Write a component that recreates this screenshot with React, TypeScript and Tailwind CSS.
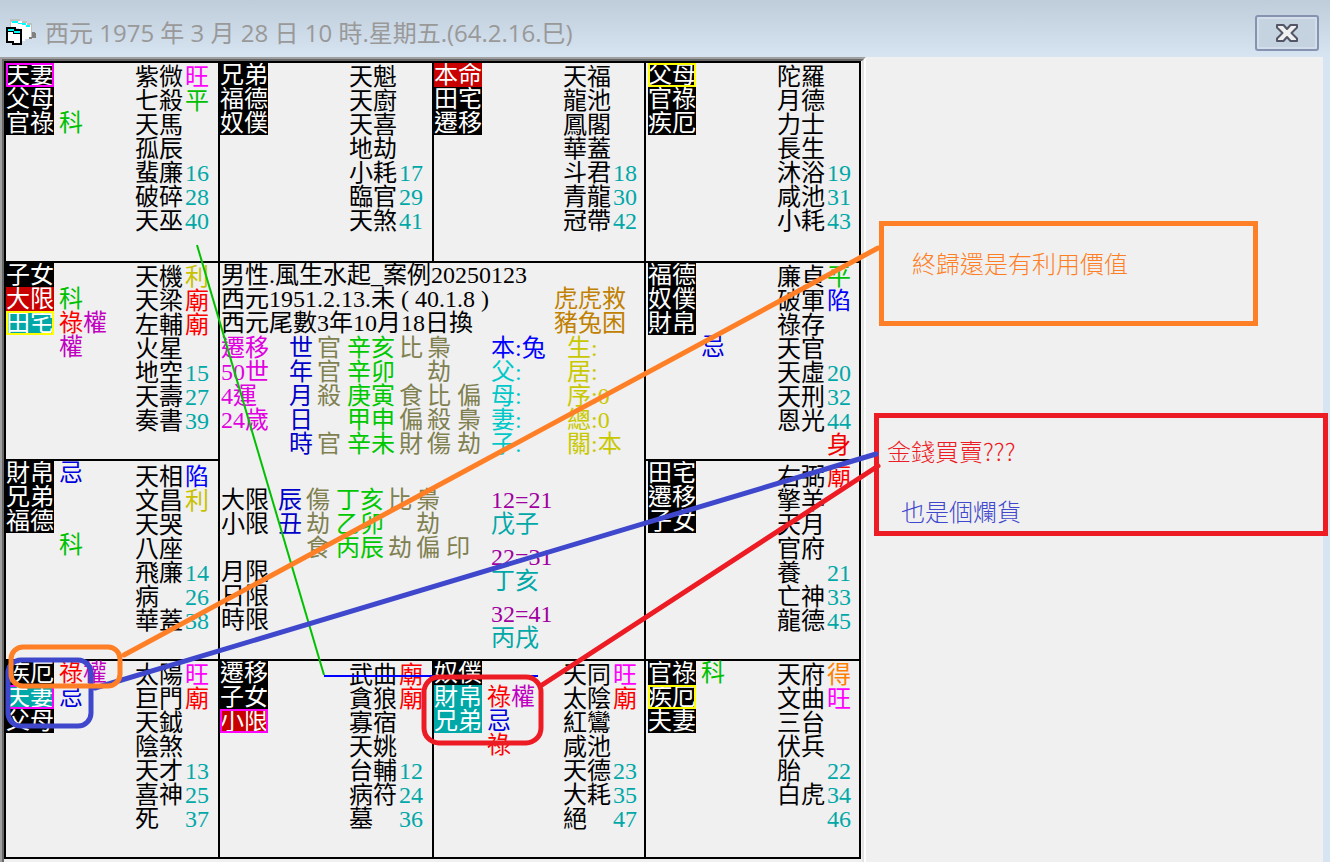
import clsx from "clsx";

type Tone = "black" | "red" | "teal";
type Outline = "magenta" | "yellow";

interface Label {
  text: string;
  tone?: Tone;
  outline?: Outline;
}

interface Palace {
  labels: Label[];
  marks?: string[];
  // star name, then brightness or age
  stars: [string, string?][];
}

const toneClass: Record<Tone, string> = {
  black: "bg-black",
  red: "bg-[#c80000]",
  teal: "bg-[#00a8a8]",
};

const outlineClass: Record<Outline, string> = {
  magenta: "outline-2 -outline-offset-2 outline-[#ff00ff]",
  yellow: "outline-2 -outline-offset-2 outline-[#ffff00]",
};

const markClass: Record<string, string> = {
  科: "text-[#00c000]",
  祿: "text-[#ff0000]",
  權: "text-[#c000c0]",
  忌: "text-[#0000e0]",
};

const statusClass: Record<string, string> = {
  旺: "text-[#ff00ff]",
  平: "text-[#00c000]",
  利: "text-[#c8c000]",
  廟: "text-[#ff0000]",
  陷: "text-[#0000ff]",
  得: "text-[#ff8000]",
  身: "text-[#f00000]",
};

const palaces: Record<string, Palace> = {
  si: {
    labels: [{ text: "夫妻", outline: "magenta" }, { text: "父母" }, { text: "官祿" }],
    marks: ["", "", "科"],
    stars: [["紫微", "旺"], ["七殺", "平"], ["天馬"], ["孤辰"], ["蜚廉", "16"], ["破碎", "28"], ["天巫", "40"]],
  },
  wu: {
    labels: [{ text: "兄弟" }, { text: "福德" }, { text: "奴僕" }],
    stars: [["天魁"], ["天廚"], ["天喜"], ["地劫"], ["小耗", "17"], ["臨官", "29"], ["天煞", "41"]],
  },
  wei: {
    labels: [{ text: "本命", tone: "red" }, { text: "田宅" }, { text: "遷移" }],
    stars: [["天福"], ["龍池"], ["鳳閣"], ["華蓋"], ["斗君", "18"], ["青龍", "30"], ["冠帶", "42"]],
  },
  shen: {
    labels: [{ text: "父母", outline: "yellow" }, { text: "官祿" }, { text: "疾厄" }],
    stars: [["陀羅"], ["月德"], ["力士"], ["長生"], ["沐浴", "19"], ["咸池", "31"], ["小耗", "43"]],
  },
  chen: {
    labels: [{ text: "子女" }, { text: "大限", tone: "red" }, { text: "田宅", tone: "teal", outline: "yellow" }],
    marks: ["", "科", "祿權", "權"],
    stars: [["天機", "利"], ["天梁", "廟"], ["左輔", "廟"], ["火星"], ["地空", "15"], ["天壽", "27"], ["奏書", "39"]],
  },
  you: {
    labels: [{ text: "福德" }, { text: "奴僕" }, { text: "財帛" }],
    marks: ["", "", "", "忌"],
    stars: [["廉貞", "平"], ["破軍", "陷"], ["祿存"], ["天官"], ["天虛", "20"], ["天刑", "32"], ["恩光", "44"], ["", "身"]],
  },
  mao: {
    labels: [{ text: "財帛" }, { text: "兄弟" }, { text: "福德" }],
    marks: ["忌", "", "", "科"],
    stars: [["天相", "陷"], ["文昌", "利"], ["天哭"], ["八座"], ["飛廉", "14"], ["病", "26"], ["華蓋", "38"]],
  },
  xu: {
    labels: [{ text: "田宅" }, { text: "遷移" }, { text: "子女" }],
    stars: [["右弼", "廟"], ["擎羊"], ["天月"], ["官府"], ["養", "21"], ["亡神", "33"], ["龍德", "45"]],
  },
  yin: {
    labels: [{ text: "疾厄" }, { text: "夫妻", tone: "teal", outline: "magenta" }, { text: "父母" }],
    marks: ["祿權", "忌"],
    stars: [["太陽", "旺"], ["巨門", "廟"], ["天鉞"], ["陰煞"], ["天才", "13"], ["喜神", "25"], ["死", "37"]],
  },
  chou: {
    labels: [{ text: "遷移" }, { text: "子女" }, { text: "小限", tone: "red", outline: "magenta" }],
    stars: [["武曲", "廟"], ["貪狼", "廟"], ["寡宿"], ["天姚"], ["台輔", "12"], ["病符", "24"], ["墓", "36"]],
  },
  zi: {
    labels: [{ text: "奴僕" }, { text: "財帛", tone: "teal" }, { text: "兄弟", tone: "teal" }],
    marks: ["", "祿權", "忌", "祿"],
    stars: [["天同", "旺"], ["太陰", "廟"], ["紅鸞"], ["咸池"], ["天德", "23"], ["大耗", "35"], ["絕", "47"]],
  },
  hai: {
    labels: [{ text: "官祿" }, { text: "疾厄", outline: "yellow" }, { text: "夫妻" }],
    marks: ["科"],
    stars: [["天府", "得"], ["文曲", "旺"], ["三台"], ["伏兵"], ["胎", "22"], ["白虎", "34"], ["", "46"]],
  },
};

// label, ten god, stem and branch, hidden gods
const pillars = [
  ["世", "官", "辛亥", "比", "梟", ""],
  ["年", "官", "辛卯", "", "劫", ""],
  ["月", "殺", "庚寅", "食", "比", "偏"],
  ["日", "", "甲申", "偏", "殺", "梟"],
  ["時", "官", "辛未", "財", "傷", "劫"],
];

const limits = [
  ["辰", "傷", "丁亥", "比", "梟", ""],
  ["丑", "劫", "乙卯", "", "劫", ""],
  ["", "食", "丙辰", "劫", "偏", "印"],
];

const decades = [
  ["12=21", "戊子"],
  ["22=31", "丁亥"],
  ["32=41", "丙戌"],
];

const PalaceCell = ({ palace, className }: { palace: Palace; className?: string }) => {
  return (
    <section className={clsx("flex border-black", className)}>
      <div className="w-12 shrink-0 text-white">
        {palace.labels.map((label) => (
          <div
            key={label.text}
            className={clsx(
              "h-6 overflow-hidden",
              toneClass[label.tone ?? "black"],
              label.outline && outlineClass[label.outline]
            )}
          >
            {label.text}
          </div>
        ))}
      </div>

      <div className="w-[81px] shrink-0 pl-[5px]">
        {palace.marks?.map((row, i) => (
          <div key={i} className="h-6">
            {[...row].map((mark) => (
              <span key={mark} className={markClass[mark]}>
                {mark}
              </span>
            ))}
          </div>
        ))}
      </div>

      <div className="stars pt-0.5">
        {palace.stars.map(([star, status], i) => (
          <div key={i} className="flex h-6">
            <span className="w-[50px]">{star}</span>
            {status && (
              <span className={statusClass[status] ?? "text-[#00a8a8]"}>{status}</span>
            )}
          </div>
        ))}
      </div>
    </section>
  );
};

const PillarTable = ({ rows, caption }: { rows: string[][]; caption: string }) => {
  return (
    <table className="w-[202px] table-fixed border-collapse self-start" aria-label={caption}>
      <colgroup>
        <col className="w-[28px]" />
        <col className="w-[30px]" />
        <col className="w-[52px]" />
        <col className="w-[28px]" />
        <col className="w-[30px]" />
        <col className="w-[34px]" />
      </colgroup>
      <tbody>
        {rows.map((row, i) => (
          <tr key={i} className="h-6 text-[#808050]">
            <td className="p-0 text-[#0000c8]">{row[0]}</td>
            <td className="p-0">{row[1]}</td>
            <td className="p-0 text-[#00c800]">{row[2]}</td>
            <td className="p-0">{row[3]}</td>
            <td className="p-0">{row[4]}</td>
            <td className="p-0">{row[5]}</td>
          </tr>
        ))}
      </tbody>
    </table>
  );
};

const Center = () => {
  return (
    <section className="col-span-2 row-span-2 border-r-2 border-b-2 border-black pl-px whitespace-nowrap">
      <div className="flex h-[73px]">
        <div className="w-[333px]">
          <p>男性.風生水起_案例20250123</p>
          <p>西元1951.2.13.未 ( 40.1.8 )</p>
          <p>西元尾數3年10月18日換</p>
        </div>
        <div className="pt-6 text-[#c08000]">
          <p>虎虎救</p>
          <p>豬兔困</p>
        </div>
      </div>

      <div className="flex">
        <div className="w-[68px] text-[#e000e0]">
          <p>遷移</p>
          <p>50世</p>
          <p>4運</p>
          <p>24歲</p>
        </div>
        <PillarTable rows={pillars} caption="四柱" />
        <div className="w-[76px] text-[#00c8c8]">
          <p className="text-[#0000ff]">本:兔</p>
          <p>父:</p>
          <p>母:</p>
          <p>妻:</p>
          <p>子:</p>
        </div>
        <div className="text-[#c8c800]">
          <p>生:</p>
          <p>居:</p>
          <p>序:0</p>
          <p>總:0</p>
          <p>關:本</p>
        </div>
      </div>

      <div className="mt-8 flex">
        <div className="w-[57px]">
          <p>大限</p>
          <p>小限</p>
          <p className="mt-6">月限</p>
          <p>日限</p>
          <p>時限</p>
        </div>
        <div className="w-[213px]">
          <PillarTable rows={limits} caption="行限" />
        </div>
        <div className="flex flex-col gap-[9px]">
          {decades.map(([range, stem]) => (
            <div key={range}>
              <p className="text-[#a000a0]">{range}</p>
              <p className="text-[#00a8a8]">{stem}</p>
            </div>
          ))}
        </div>
      </div>
    </section>
  );
};

const AppIcon = () => {
  return (
    <svg width="32" height="28" viewBox="0 0 32 28" shapeRendering="crispEdges" aria-hidden="true">
      <path d="M5 1h10v1h7v2h5v14h-3v2h-4v2h-6V9H5z" fill="#fff" />
      <path d="M5 0h10v2h-4v1H6v5H5zM17 2h5v2h5v14h-1V6h-4V4h-5z" fill="#c0c0c0" />
      <path d="M7 2h6v2H7zM13 4h6v1h-6zM17 4h4v2h-4zM21 6h4v2h-4z" fill="#00ffff" />
      <path d="M27 13h3v1h1v5h-4zM24 18h3v2h-3z" fill="#808080" />
      <path d="M1 8h10v2h6v16H7v-2H1z" fill="#000" />
      <path d="M3 13h5v2h7v9H9v-2H3z" fill="#fff" />
      <path d="M3 10h6v2H3zM9 12h6v2H9z" fill="#00ffff" />
    </svg>
  );
};

const TitleBar = () => {
  return (
    <header
      className="
        flex
        h-[57px]
        items-center
        justify-between
        bg-linear-to-b
        from-[#bfccd9]
        to-[#d7e4f2]
        pt-2
        pr-[11px]
        pl-[5px]
      "
    >
      <div className="flex items-center gap-2">
        <AppIcon />
        <h1 className="[font-family:'Open_Sans','Noto_Sans_CJK_TC',sans-serif] text-2xl leading-8 font-normal whitespace-nowrap text-[#999]">
          西元 1975 年 3 月 28 日 10 時.星期五.(64.2.16.巳)
        </h1>
      </div>

      <button
        type="button"
        aria-label="關閉"
        className="
          flex
          h-9
          w-16
          items-center
          justify-center
          rounded-[3px]
          border-2
          border-[#8593b1]
          bg-[#c5d2e0]
          inset-ring-2
          inset-ring-[#d3deea]
        "
      >
        <svg width="22" height="18" viewBox="0 0 22 18" aria-hidden="true">
          <path
            d="M1 1h6.5l3.5 4 3.5-4H21v2.500L15.500 9 21 14.500V17h-6.500L11 13l-3.500 4H1v-2.500L6.500 9 1 3.500z"
            fill="#f0f0f0"
            stroke="#535666"
            strokeWidth="2"
            strokeLinejoin="round"
          />
        </svg>
      </button>
    </header>
  );
};

// Hand-drawn marks that run across the chart and the notes beside it
const Annotations = () => {
  return (
    <svg className="pointer-events-none absolute inset-0 h-full w-full" fill="none" aria-hidden="true">
      <path d="M197 245L324 675" stroke="#00c000" strokeWidth="2" />
      <path d="M324 676H538" stroke="#0000ff" strokeWidth="2" />
      <g strokeWidth="5" strokeLinecap="round">
        <rect x="8" y="660" width="83" height="66" rx="13" stroke="#3f48cc" />
        <path d="M95 688L876 454" stroke="#3f48cc" />
        <rect x="11" y="647" width="109" height="39" rx="12" stroke="#ff7f27" />
        <path d="M124 655L878 248" stroke="#ff7f27" />
        <rect x="424" y="677" width="117" height="66" rx="15" stroke="#ed1c24" />
        <path d="M542 685L878 466" stroke="#ed1c24" />
      </g>
    </svg>
  );
};

export default function App() {
  return (
    <div className="relative flex min-h-screen flex-col overflow-hidden bg-[#f0f0f0] text-black">
      <TitleBar />

      <main className="flex flex-1">
        <div className="w-[866px] shrink-0 border-t-2 border-r-2 border-l-2 border-t-[#a0a0a0] border-r-white border-l-[#a0a0a0] flex">
          <div className="flex-1 border-t-2 border-r-2 border-l-2 border-t-[#696969] border-r-[#e3e3e3] border-l-[#696969] pr-px">
            <div
              className="
                grid
                grid-cols-[214fr_214fr_212fr_213fr]
                grid-rows-[200px_198px_200px_196px]
                border-2
                border-black
                [font-family:'Liberation_Serif','Noto_Sans_CJK_TC',serif]
                text-2xl
                leading-6
                font-normal
              "
            >
              <PalaceCell palace={palaces.si} className="border-r-2 border-b-2" />
              <PalaceCell palace={palaces.wu} className="border-r-2 border-b-2" />
              <PalaceCell palace={palaces.wei} className="border-r-2 border-b-2" />
              <PalaceCell palace={palaces.shen} className="border-b-2 pl-0.5" />

              <PalaceCell palace={palaces.chen} className="border-r-2 border-b-2" />
              <Center />
              <PalaceCell palace={palaces.you} className="border-b-2 pl-0.5" />

              <PalaceCell palace={palaces.mao} className="border-r-2 border-b-2 [&_.stars]:pt-1" />
              <PalaceCell palace={palaces.xu} className="border-b-2 pl-0.5 [&_.stars]:pt-1" />

              <PalaceCell palace={palaces.yin} className="border-r-2" />
              <PalaceCell palace={palaces.chou} className="border-r-2" />
              <PalaceCell palace={palaces.zi} className="border-r-2" />
              <PalaceCell palace={palaces.hai} className="pl-0.5" />
            </div>
          </div>
        </div>

        <aside
          className="
            flex
            flex-1
            flex-col
            gap-[87px]
            border-r-[7px]
            border-[#d7e4f2]
            pt-[164px]
            pl-2
            [font-family:'Noto_Sans_CJK_TC',sans-serif]
            text-2xl
            font-light
          "
        >
          <div className="mr-[65px] ml-[5px] h-[105px] border-5 border-[#ff7f27] px-7 pt-[21px] text-[#ff7f27]">
            <p>終歸還是有利用價值</p>
          </div>

          <div className="-mr-[5px] h-[123px] border-5 border-[#ed1c24] px-2 pt-[17px]">
            <p className="text-[#ed1c24]">金錢買賣???</p>
            <p className="mt-7 pl-3.5 text-[#3f48cc]">也是個爛貨</p>
          </div>
        </aside>
      </main>

      <Annotations />
    </div>
  );
}
